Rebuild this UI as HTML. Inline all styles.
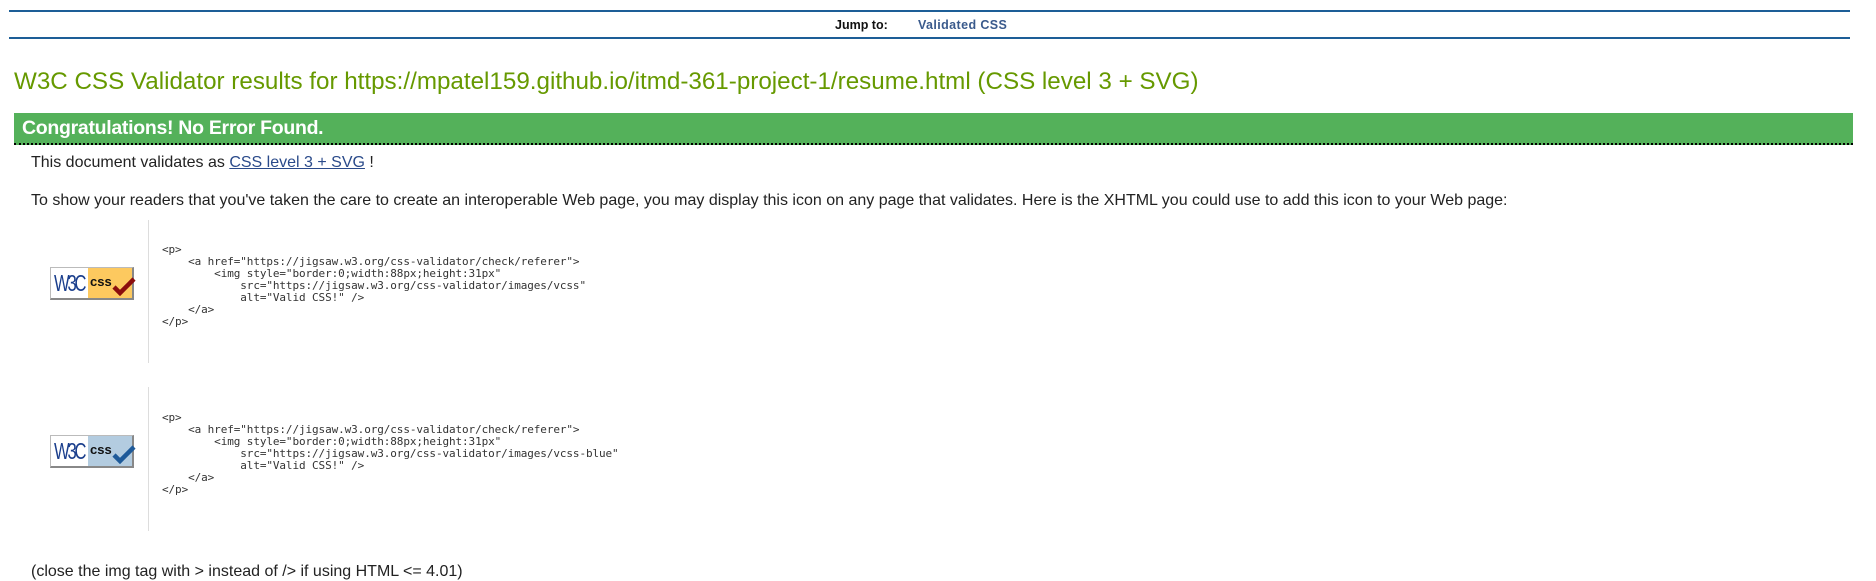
<!DOCTYPE html>
<html><head><meta charset="utf-8"><style>
*{margin:0;padding:0}
body{width:1876px;height:576px;overflow:hidden;background:#fff;font-family:"Liberation Sans",Arial,sans-serif;position:relative;color:#222}
.abs{position:absolute;white-space:nowrap}
.hl{position:absolute;left:9px;width:1841px;height:0;border-top:2px solid #1d5e97}
.code{position:absolute;left:162px;font:11px/12px "DejaVu Sans Mono","Liberation Mono",monospace;color:#333;white-space:pre;letter-spacing:-0.1px}
.vl{position:absolute;left:148px;width:1px;background:#ddd}
.badge{position:absolute;left:50px;width:81px;height:30px;border:1px solid #bbb;border-right:2px solid #888;border-bottom:2px solid #888;background:#fff;overflow:visible}
.badge .w{position:absolute;left:3px;top:3px;font:23px/24px "Liberation Sans",sans-serif;color:#1a3e8c;letter-spacing:-3px;transform:scaleX(.72);transform-origin:left}
.badge .r{position:absolute;left:37px;top:0;width:44px;height:30px}
.badge .c{position:absolute;left:39px;top:6px;font:bold 13px/16px "Liberation Sans",sans-serif;color:#111}
.badge svg{position:absolute;left:61px;top:8px}
</style></head><body>
<div class="hl" style="top:10px"></div>
<div class="hl" style="top:37px"></div>
<div class="abs" style="left:835px;top:17px;font:bold 12.5px/16px 'Liberation Sans',sans-serif;color:#111">Jump to:</div>
<div class="abs" style="left:918px;top:17px;font:bold 12.5px/16px 'Liberation Sans',sans-serif;color:#3a5a8c;letter-spacing:.4px">Validated CSS</div>
<div class="abs" style="left:14px;top:67px;font:24.2px/30px 'Liberation Sans',sans-serif;color:#669900">W3C CSS Validator results for https://mpatel159.github.io/itmd-361-project-1/resume.html (CSS level 3 + SVG)</div>
<div class="abs" style="left:14px;top:113px;width:1839px;height:30px;background:#54b15a;border-bottom:2px dotted #000"></div>
<div class="abs" style="left:22px;top:116px;font:bold 19.5px/24px 'Liberation Sans',sans-serif;color:#fff;letter-spacing:-0.3px">Congratulations! No Error Found.</div>
<div class="abs" style="left:31px;top:153px;font:16px/19px 'Liberation Sans',sans-serif">This document validates as <span style="color:#2a4a8a;text-decoration:underline">CSS level 3 + SVG</span> !</div>
<div class="abs" style="left:31px;top:191px;font:16px/19px 'Liberation Sans',sans-serif">To show your readers that you've taken the care to create an interoperable Web page, you may display this icon on any page that validates. Here is the XHTML you could use to add this icon to your Web page:</div>

<div class="vl" style="top:220px;height:143px"></div>
<div class="badge" style="top:267px"><div class="w">W3C</div><div class="r" style="background:#fdc95f"></div><div class="c">css</div>
<svg width="24" height="20" viewBox="0 0 24 20"><path d="M2 11 L8 17 L22 3" stroke="#8b0d0d" stroke-width="4.5" fill="none"/></svg></div>
<div class="code" style="top:244px">&lt;p&gt;
    &lt;a href="https://jigsaw.w3.org/css-validator/check/referer"&gt;
        &lt;img style="border:0;width:88px;height:31px"
            src="https://jigsaw.w3.org/css-validator/images/vcss"
            alt="Valid CSS!" /&gt;
    &lt;/a&gt;
&lt;/p&gt;</div>

<div class="vl" style="top:387px;height:144px"></div>
<div class="badge" style="top:435px"><div class="w">W3C</div><div class="r" style="background:#b3cce0"></div><div class="c">css</div>
<svg width="24" height="20" viewBox="0 0 24 20"><path d="M2 11 L8 17 L22 3" stroke="#1e5a99" stroke-width="4.5" fill="none"/></svg></div>
<div class="code" style="top:412px">&lt;p&gt;
    &lt;a href="https://jigsaw.w3.org/css-validator/check/referer"&gt;
        &lt;img style="border:0;width:88px;height:31px"
            src="https://jigsaw.w3.org/css-validator/images/vcss-blue"
            alt="Valid CSS!" /&gt;
    &lt;/a&gt;
&lt;/p&gt;</div>

<div class="abs" style="left:31px;top:562px;font:16px/19px 'Liberation Sans',sans-serif">(close the img tag with &gt; instead of /&gt; if using HTML &lt;= 4.01)</div>
</body></html>
